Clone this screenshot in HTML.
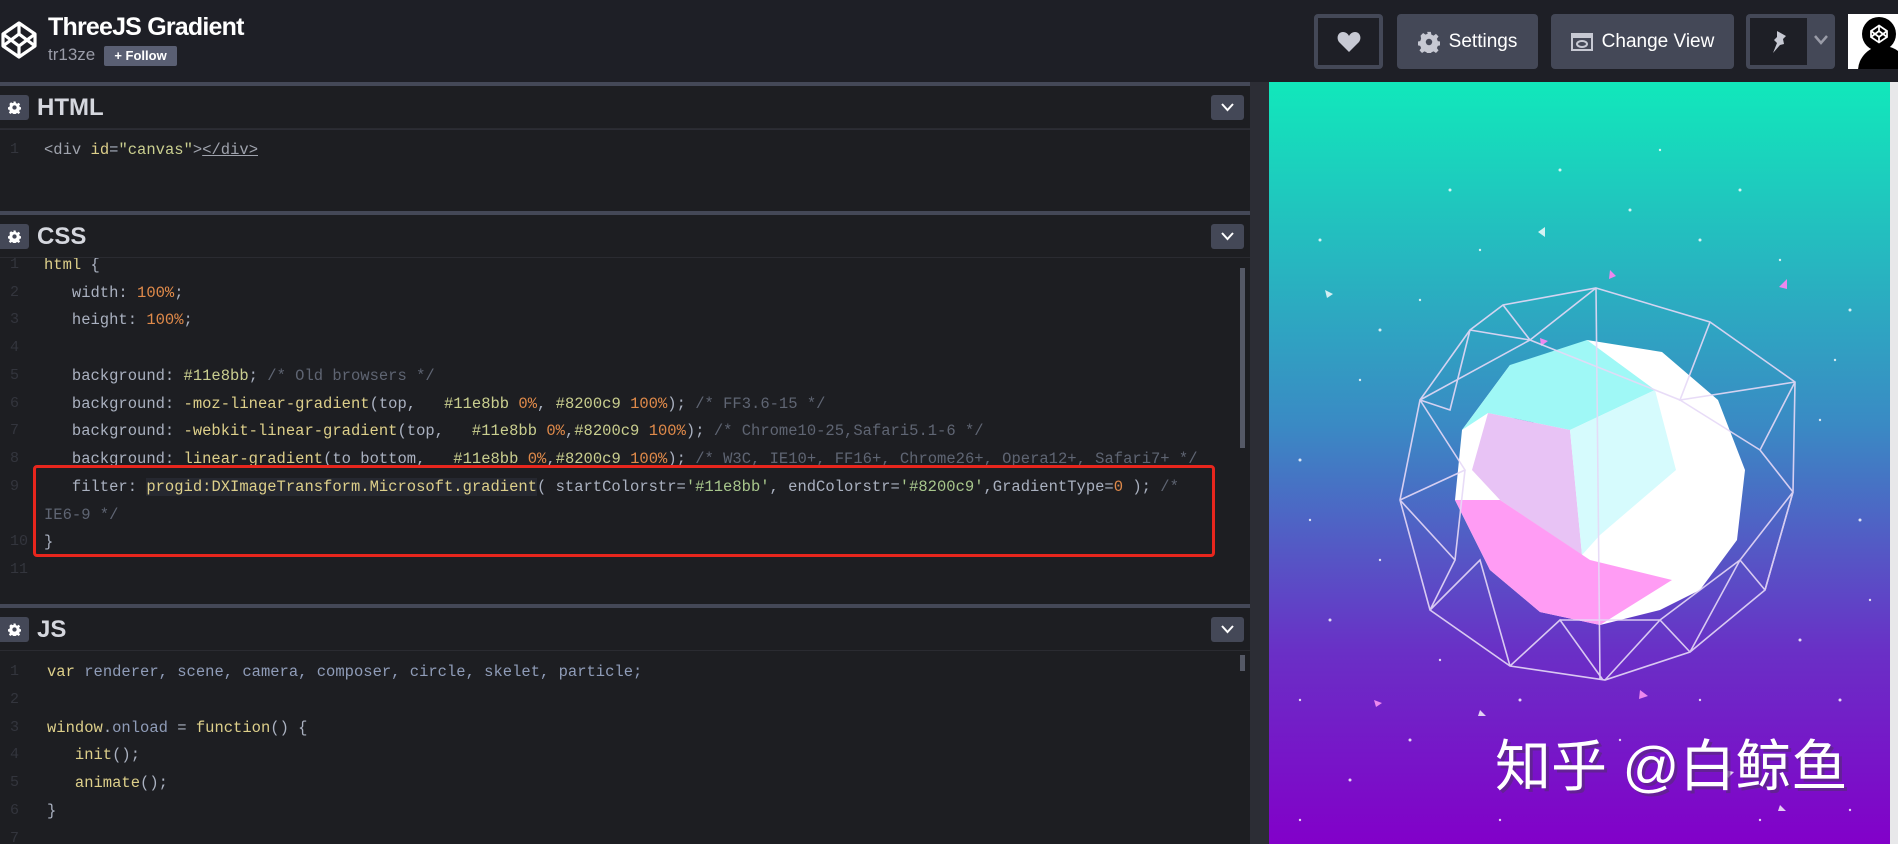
<!DOCTYPE html>
<html><head><meta charset="utf-8">
<style>
*{margin:0;padding:0;box-sizing:border-box}
body{width:1898px;height:844px;overflow:hidden;background:#1e1f26;font-family:"Liberation Sans",sans-serif;position:relative}
.a{position:absolute}
.btn{position:absolute;top:14px;height:55px;background:#444857;border-radius:4px;color:#fff;font-size:19px;display:flex;align-items:center;justify-content:center;gap:9px}
.bar{position:absolute;left:0;width:1250px;background:#444857;height:4px}
.tb{position:absolute;left:0;width:1250px;height:43px;background:#1d1e22;border-bottom:1px solid #2a2b31}
.gear{position:absolute;left:0;top:9px;width:29px;height:25px;background:#444857;border-radius:0 3px 3px 0;display:flex;align-items:center;justify-content:center}
.ttl{position:absolute;left:37px;top:8px;color:#d5d7de;font-size:24px;font-weight:bold}
.chev{position:absolute;left:1211px;top:9px;width:33px;height:25px;background:#444857;border-radius:3px}
.ed{position:absolute;left:0;width:1250px;background:#1d1e22;overflow:hidden}
.ln{position:absolute;font-family:"Liberation Mono",monospace;font-size:15.5px;white-space:pre;color:#aab1c0;line-height:28px}
.n{position:absolute;left:10px;color:#33353d;font-family:"Liberation Mono",monospace;font-size:15px;line-height:28px}
.y{color:#ddcf8a}.o{color:#e08a4a}.c{color:#5f6573}.h{color:#c9ce8f}.g{color:#9fa3ad}.b{color:#8f9cb8}.s{color:#a8c78c}
</style></head><body>
<svg class="a" style="left:0;top:20px" width="38" height="40" viewBox="0 0 38 40"><g fill="none" stroke="#fff" stroke-width="3.2" stroke-linejoin="round"><path d="M19 3 L35 14 L35 26 L19 37 L3 26 L3 14 Z"/><path d="M19 3 L19 14 M3 14 L19 26 L35 14 M3 26 L19 14 L35 26 M19 26 L19 37"/></g></svg>
<div class="a" style="left:48px;top:13px;color:#fff;font-size:25px;font-weight:bold;letter-spacing:-0.8px">ThreeJS Gradient</div>
<div class="a" style="left:48px;top:45px;color:#9a9ca8;font-size:17px">tr13ze</div>
<div class="a" style="left:104px;top:46px;width:73px;height:20px;background:#5a5f73;color:#fff;font-size:13px;font-weight:bold;text-align:center;line-height:20px;border-radius:2px">+ Follow</div>
<div class="a" style="left:1314px;top:14px;width:69px;height:55px;background:#1e1f26;border:4px solid #444857;border-radius:4px;display:flex;align-items:center;justify-content:center"><svg width="24" height="22" viewBox="0 0 24 22"><path d="M12 21 L2 11 C-1 7 1 1 6 1 C9 1 11 3 12 5 C13 3 15 1 18 1 C23 1 25 7 22 11 Z" fill="#c7c9d3"/></svg></div>
<div class="btn" style="left:1397px;width:141px"><svg width="22" height="22" viewBox="0 0 24 24"><path fill="#c7c9d3" d="M10 1h4l.6 3 2.5 1 2.5-1.8 2.8 2.8-1.8 2.5 1 2.5 3 .6v4l-3 .6-1 2.5 1.8 2.5-2.8 2.8-2.5-1.8-2.5 1-.6 3h-4l-.6-3-2.5-1-2.5 1.8-2.8-2.8 1.8-2.5-1-2.5-3-.6v-4l3-.6 1-2.5L2.8 5l2.8-2.8L8.1 4l2.5-1z"/><circle cx="12" cy="12" r="3.5" fill="#444857"/></svg>Settings</div>
<div class="btn" style="left:1551px;width:183px"><svg width="22" height="18" viewBox="0 0 22 18"><rect x="1" y="1" width="20" height="16" fill="none" stroke="#c7c9d3" stroke-width="2"/><rect x="1" y="1" width="20" height="4" fill="#c7c9d3"/><ellipse cx="11" cy="11" rx="5" ry="3" fill="none" stroke="#c7c9d3" stroke-width="2"/></svg>Change View</div>
<div class="a" style="left:1746px;top:14px;width:89px;height:55px;background:#444857;border-radius:4px"><div class="a" style="left:4px;top:4px;width:57px;height:47px;background:#1e1f26;display:flex;align-items:center;justify-content:center"><svg width="20" height="24" viewBox="0 0 20 24"><path d="M8 1 L17 6 L14 9 L15 14 L11 15 L4 23 L8 13 L5 10 L8 7 Z" fill="#c7c9d3"/></svg></div><svg class="a" style="left:68px;top:21px" width="14" height="10" viewBox="0 0 14 10"><path d="M1 1 L7 8 L13 1" fill="none" stroke="#9a9ca8" stroke-width="2.5"/></svg></div>
<div class="a" style="left:1848px;top:14px;width:50px;height:55px;background:#fff;overflow:hidden"><div class="a" style="left:10px;top:32px;width:50px;height:40px;background:#000;border-radius:25px 25px 0 0"></div><div class="a" style="left:14px;top:3px;width:34px;height:34px;background:#000;border-radius:50%"></div><svg class="a" style="left:21px;top:10px" width="20" height="20" viewBox="0 0 38 40"><g fill="none" stroke="#fff" stroke-width="3.5"><path d="M19 3 L35 14 L35 26 L19 37 L3 26 L3 14 Z"/><path d="M19 3 L19 14 M3 14 L19 26 L35 14 M3 26 L19 14 L35 26 M19 26 L19 37"/></g></svg></div>

<div class="a" style="left:0;top:82px;width:1269px;height:762px;background:#2c2d35"></div>
<div class="bar" style="top:82px"></div>
<div class="tb" style="top:86px"><div class="gear"><svg width="13" height="13" viewBox="0 0 24 24"><path fill="#fff" d="M10 1h4l.6 3 2.5 1 2.5-1.8 2.8 2.8-1.8 2.5 1 2.5 3 .6v4l-3 .6-1 2.5 1.8 2.5-2.8 2.8-2.5-1.8-2.5 1-.6 3h-4l-.6-3-2.5-1-2.5 1.8-2.8-2.8 1.8-2.5-1-2.5-3-.6v-4l3-.6 1-2.5L2.8 5l2.8-2.8L8.1 4l2.5-1z"/><circle cx="12" cy="12" r="4" fill="#444857"/></svg></div><div class="ttl">HTML</div><div class="chev"><svg style="margin:8px 10px" width="13" height="9" viewBox="0 0 13 9"><path d="M1 1l5.5 6L12 1" fill="none" stroke="#fff" stroke-width="2"/></svg></div></div>
<div class="ed" style="top:130px;height:81px"><div class="n" style="top:6px">1</div><div class="ln" style="left:44px;top:6px"><span class="g">&lt;div</span> <span class="y">id</span>=<span class="h">"canvas"</span><span class="g">&gt;</span><span class="g" style="text-decoration:underline">&lt;/div&gt;</span></div></div>
<div class="bar" style="top:211px"></div>
<div class="tb" style="top:215px"><div class="gear"><svg width="13" height="13" viewBox="0 0 24 24"><path fill="#fff" d="M10 1h4l.6 3 2.5 1 2.5-1.8 2.8 2.8-1.8 2.5 1 2.5 3 .6v4l-3 .6-1 2.5 1.8 2.5-2.8 2.8-2.5-1.8-2.5 1-.6 3h-4l-.6-3-2.5-1-2.5 1.8-2.8-2.8 1.8-2.5-1-2.5-3-.6v-4l3-.6 1-2.5L2.8 5l2.8-2.8L8.1 4l2.5-1z"/><circle cx="12" cy="12" r="4" fill="#444857"/></svg></div><div class="ttl">CSS</div><div class="chev"><svg style="margin:8px 10px" width="13" height="9" viewBox="0 0 13 9"><path d="M1 1l5.5 6L12 1" fill="none" stroke="#fff" stroke-width="2"/></svg></div></div>
<div class="ed" style="top:258px;height:346px">
<div class="a" style="left:1240px;top:10px;width:5px;height:180px;background:#555966"></div>
<div class="n" style="top:-7px">1</div><div class="n" style="top:21px">2</div><div class="n" style="top:48px">3</div><div class="n" style="top:76px">4</div><div class="n" style="top:104px">5</div><div class="n" style="top:132px">6</div><div class="n" style="top:159px">7</div><div class="n" style="top:187px">8</div><div class="n" style="top:215px">9</div><div class="n" style="top:270px">10</div><div class="n" style="top:298px">11</div>
<div class="ln" style="left:44px;top:-7px"><span class="y">html</span> {</div>
<div class="ln" style="left:44px;top:21px">   width: <span class="o">100%</span>;</div>
<div class="ln" style="left:44px;top:48px">   height: <span class="o">100%</span>;</div>
<div class="ln" style="left:44px;top:104px">   background: <span class="h">#11e8bb</span>; <span class="c">/* Old browsers */</span></div>
<div class="ln" style="left:44px;top:132px">   background: <span class="y">-moz-linear-gradient</span>(top,   <span class="h">#11e8bb</span> <span class="o">0%</span>, <span class="h">#8200c9</span> <span class="o">100%</span>); <span class="c">/* FF3.6-15 */</span></div>
<div class="ln" style="left:44px;top:159px">   background: <span class="y">-webkit-linear-gradient</span>(top,   <span class="h">#11e8bb</span> <span class="o">0%</span>,<span class="h">#8200c9</span> <span class="o">100%</span>); <span class="c">/* Chrome10-25,Safari5.1-6 */</span></div>
<div class="ln" style="left:44px;top:187px">   background: <span class="y">linear-gradient</span>(to bottom,   <span class="h">#11e8bb</span> <span class="o">0%</span>,<span class="h">#8200c9</span> <span class="o">100%</span>); <span class="c">/* W3C, IE10+, FF16+, Chrome26+, Opera12+, Safari7+ */</span></div>
<div class="ln" style="left:44px;top:215px">   filter: <span class="y" style="background:#262830">progid:DXImageTransform.Microsoft.gradient</span>( startColorstr=<span class="s">'#11e8bb'</span>, endColorstr=<span class="s">'#8200c9'</span>,GradientType=<span class="o">0</span> ); <span class="c">/*</span></div>
<div class="ln" style="left:44px;top:243px"><span class="c">IE6-9 */</span></div>
<div class="ln" style="left:44px;top:270px">}</div>
<div class="a" style="left:33px;top:207px;width:1182px;height:92px;border:3px solid #e8261d;border-radius:4px"></div>
</div>
<div class="bar" style="top:604px"></div>
<div class="tb" style="top:608px"><div class="gear"><svg width="13" height="13" viewBox="0 0 24 24"><path fill="#fff" d="M10 1h4l.6 3 2.5 1 2.5-1.8 2.8 2.8-1.8 2.5 1 2.5 3 .6v4l-3 .6-1 2.5 1.8 2.5-2.8 2.8-2.5-1.8-2.5 1-.6 3h-4l-.6-3-2.5-1-2.5 1.8-2.8-2.8 1.8-2.5-1-2.5-3-.6v-4l3-.6 1-2.5L2.8 5l2.8-2.8L8.1 4l2.5-1z"/><circle cx="12" cy="12" r="4" fill="#444857"/></svg></div><div class="ttl">JS</div><div class="chev"><svg style="margin:8px 10px" width="13" height="9" viewBox="0 0 13 9"><path d="M1 1l5.5 6L12 1" fill="none" stroke="#fff" stroke-width="2"/></svg></div></div>
<div class="ed" style="top:651px;height:193px">
<div class="a" style="left:1240px;top:4px;width:5px;height:16px;background:#555966"></div>
<div class="n" style="top:7px">1</div><div class="n" style="top:35px">2</div><div class="n" style="top:63px">3</div><div class="n" style="top:90px">4</div><div class="n" style="top:118px">5</div><div class="n" style="top:146px">6</div><div class="n" style="top:174px">7</div>
<div class="ln" style="left:47px;top:7px"><span class="y">var</span> <span class="b">renderer, scene, camera, composer, circle, skelet, particle;</span></div>
<div class="ln" style="left:47px;top:63px"><span class="y">window</span>.<span class="b">onload</span> = <span class="y">function</span>() {</div>
<div class="ln" style="left:47px;top:90px">   <span class="y">init</span>();</div>
<div class="ln" style="left:47px;top:118px">   <span class="y">animate</span>();</div>
<div class="ln" style="left:47px;top:146px">}</div>
</div>

<div class="a" style="left:1269px;top:82px;width:621px;height:762px;background:linear-gradient(#11e8bb,#3a8ac4 45%,#6a2fc6 75%,#8200c9)"></div>
<div class="a" style="left:1890px;top:82px;width:8px;height:762px;background:#e8e8ea"></div>
<svg class="a" style="left:1269px;top:82px" width="621" height="762" viewBox="1269 82 621 762">
<g fill="#fff" opacity=".8">
<circle cx="1320" cy="240" r="1.5"/><circle cx="1450" cy="190" r="1.5"/><circle cx="1630" cy="210" r="1.5"/><circle cx="1700" cy="240" r="1.5"/><circle cx="1380" cy="330" r="1.5"/><circle cx="1850" cy="310" r="1.5"/><circle cx="1300" cy="460" r="1.5"/><circle cx="1330" cy="620" r="1.5"/><circle cx="1860" cy="520" r="1.5"/><circle cx="1840" cy="700" r="1.5"/><circle cx="1410" cy="740" r="1.5"/><circle cx="1350" cy="780" r="1.5"/><circle cx="1520" cy="700" r="1.5"/><circle cx="1800" cy="640" r="1.5"/><circle cx="1560" cy="170" r="1.5"/><circle cx="1740" cy="190" r="1.5"/>
<circle cx="1360" cy="380" r="1.2"/><circle cx="1420" cy="300" r="1.2"/><circle cx="1820" cy="420" r="1.2"/><circle cx="1835" cy="360" r="1.2"/><circle cx="1380" cy="560" r="1.2"/><circle cx="1440" cy="660" r="1.2"/><circle cx="1700" cy="700" r="1.2"/><circle cx="1620" cy="740" r="1.2"/><circle cx="1870" cy="600" r="1.2"/><circle cx="1300" cy="700" r="1.2"/><circle cx="1480" cy="250" r="1.2"/><circle cx="1780" cy="260" r="1.2"/><circle cx="1660" cy="150" r="1.2"/><circle cx="1310" cy="520" r="1.2"/><circle cx="1850" cy="810" r="1.2"/><circle cx="1500" cy="820" r="1.2"/><circle cx="1300" cy="820" r="1.2"/><circle cx="1760" cy="820" r="1.2"/>
<path d="M1325 290l8 4-6 4z M1538 232l7-5v10z M1725 770l9 2-6 6z M1480 710l6 6-8 0z M1780 805l6 6-8 0z"/>
</g>
<g fill="#ee88ee"><path d="M1610 270l6 6-7 3z M1779 287l8-8v10z M1540 338l8 3-7 5z M1374 700l8 3-6 4z M1640 690l8 6-9 3z"/></g>
<path d="M1516 450L1587 340L1662 352L1718 400L1745 470L1737 540L1700 590L1660 610L1600 625L1540 612L1490 570L1455 500L1462 430L1510 365Z" fill="#fff"/>
<path d="M1462 430L1510 365L1587 340L1655 390L1570 430L1488 413Z" fill="#9ff8f6"/>
<path d="M1488 413L1570 430L1582 555L1500 500L1472 470Z" fill="#e8c3f5"/>
<path d="M1570 430L1655 390L1676 470L1600 535L1582 555Z" fill="#d6fbfd"/>
<path d="M1455 500L1490 570L1540 612L1600 625L1672 580L1590 560L1500 500Z" fill="#ff9cf4"/>
<g fill="none" stroke="#e6d9f7" stroke-width="1.6" opacity=".9">
<path d="M1596 288L1710 322L1795 382L1793 492L1765 590L1690 652L1605 680L1510 666L1430 610L1400 500L1420 400L1470 330L1503 305Z"/>
<path d="M1596 288L1530 340L1470 330M1596 288L1600 680M1710 322L1680 400L1795 382M1420 400L1465 470L1400 500M1430 610L1480 560L1510 666M1690 652L1740 560L1765 590M1765 590L1793 492L1740 560M1503 305L1530 340L1420 400M1603 680L1560 620L1510 666M1605 680L1660 620L1690 652M1400 500L1455 560L1430 610M1795 382L1760 450L1793 492M1680 400L1760 450M1530 340L1680 400M1465 470L1455 560M1740 560L1660 620M1560 620L1660 620M1470 330L1450 410L1420 400"/>
</g>
<text x="1495" y="786" font-family="'Liberation Sans','Noto Sans CJK SC',sans-serif" font-size="56" fill="#5a2a80" opacity=".7" transform="translate(3,3)">知乎 @白鲸鱼</text>
<text x="1495" y="786" font-family="'Liberation Sans','Noto Sans CJK SC',sans-serif" font-size="56" fill="#fff">知乎 @白鲸鱼</text>
</svg>
</body></html>
